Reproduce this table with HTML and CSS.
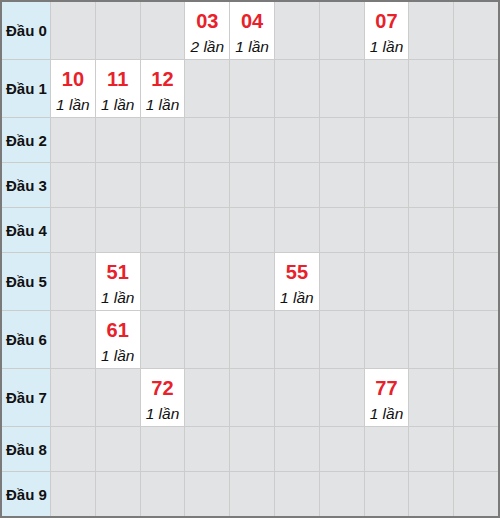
FILE: index.html
```html
<!DOCTYPE html>
<html>
<head>
<meta charset="utf-8">
<link rel="stylesheet" href="styles.css">
</head>
<body>
<div class="board">
  <div class="head">Đầu 0</div>
  <div class="c"></div><div class="c"></div><div class="c"></div>
  <div class="c hit"><span class="n">03</span><span class="t">2 lần</span></div>
  <div class="c hit"><span class="n">04</span><span class="t">1 lần</span></div>
  <div class="c"></div><div class="c"></div>
  <div class="c hit"><span class="n">07</span><span class="t">1 lần</span></div>
  <div class="c"></div><div class="c"></div>

  <div class="head">Đầu 1</div>
  <div class="c hit"><span class="n">10</span><span class="t">1 lần</span></div>
  <div class="c hit"><span class="n">11</span><span class="t">1 lần</span></div>
  <div class="c hit"><span class="n">12</span><span class="t">1 lần</span></div>
  <div class="c"></div><div class="c"></div><div class="c"></div><div class="c"></div><div class="c"></div><div class="c"></div><div class="c"></div>

  <div class="head">Đầu 2</div>
  <div class="c"></div><div class="c"></div><div class="c"></div><div class="c"></div><div class="c"></div><div class="c"></div><div class="c"></div><div class="c"></div><div class="c"></div><div class="c"></div>

  <div class="head">Đầu 3</div>
  <div class="c"></div><div class="c"></div><div class="c"></div><div class="c"></div><div class="c"></div><div class="c"></div><div class="c"></div><div class="c"></div><div class="c"></div><div class="c"></div>

  <div class="head">Đầu 4</div>
  <div class="c"></div><div class="c"></div><div class="c"></div><div class="c"></div><div class="c"></div><div class="c"></div><div class="c"></div><div class="c"></div><div class="c"></div><div class="c"></div>

  <div class="head">Đầu 5</div>
  <div class="c"></div>
  <div class="c hit"><span class="n">51</span><span class="t">1 lần</span></div>
  <div class="c"></div><div class="c"></div><div class="c"></div>
  <div class="c hit"><span class="n">55</span><span class="t">1 lần</span></div>
  <div class="c"></div><div class="c"></div><div class="c"></div><div class="c"></div>

  <div class="head">Đầu 6</div>
  <div class="c"></div>
  <div class="c hit"><span class="n">61</span><span class="t">1 lần</span></div>
  <div class="c"></div><div class="c"></div><div class="c"></div><div class="c"></div><div class="c"></div><div class="c"></div><div class="c"></div><div class="c"></div>

  <div class="head">Đầu 7</div>
  <div class="c"></div><div class="c"></div>
  <div class="c hit"><span class="n">72</span><span class="t">1 lần</span></div>
  <div class="c"></div><div class="c"></div><div class="c"></div><div class="c"></div>
  <div class="c hit"><span class="n">77</span><span class="t">1 lần</span></div>
  <div class="c"></div><div class="c"></div>

  <div class="head">Đầu 8</div>
  <div class="c"></div><div class="c"></div><div class="c"></div><div class="c"></div><div class="c"></div><div class="c"></div><div class="c"></div><div class="c"></div><div class="c"></div><div class="c"></div>

  <div class="head">Đầu 9</div>
  <div class="c"></div><div class="c"></div><div class="c"></div><div class="c"></div><div class="c"></div><div class="c"></div><div class="c"></div><div class="c"></div><div class="c"></div><div class="c"></div>
</div>
</body>
</html>
```
FILE: styles.css
```css
html, body {
  margin: 0;
  padding: 0;
  background: #ffffff;
}
.board {
  width: 500px;
  height: 518px;
  box-sizing: border-box;
  border: 2px solid #7a7a7a;
  background: #cccccc;
  display: grid;
  grid-template-columns: 48px repeat(10, 1fr);
  grid-template-rows: 57px 57px 44px 44px 44px 57px 57px 57px 44px 44px;
  gap: 1px;
  font-family: "Liberation Sans", Arial, sans-serif;
}
.head {
  background: #d9edf7;
  display: flex;
  align-items: center;
  padding-left: 4px;
  font-weight: bold;
  font-size: 15px;
  color: #111;
}
.c {
  background: #e2e3e5;
}
.c.hit {
  background: #ffffff;
  display: flex;
  flex-direction: column;
  align-items: center;
  padding-top: 7px;
  box-sizing: border-box;
}
.n {
  color: #e8212a;
  font-weight: bold;
  font-size: 20px;
  line-height: 24px;
}
.t {
  font-style: italic;
  font-size: 15.5px;
  line-height: 20px;
  margin-top: 4px;
  color: #111;
}
```
